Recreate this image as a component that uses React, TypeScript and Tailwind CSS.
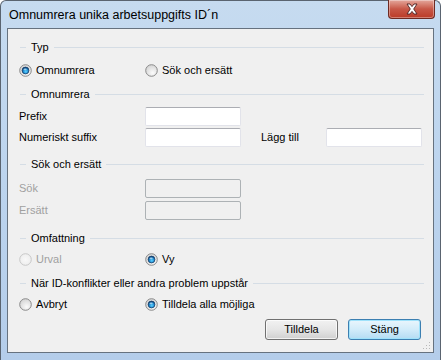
import React from "react";

function Radio({ checked = false, disabled = false }: { checked?: boolean; disabled?: boolean }) {
  return (
    <svg width="13" height="13" viewBox="0 0 13 13" className="shrink-0">
      <defs>
        <radialGradient id="rf" cx="0.6" cy="0.7" r="0.7">
          <stop offset="0" stopColor="#fbfbfb" />
          <stop offset="1" stopColor="#d4d4d4" />
        </radialGradient>
        <radialGradient id="rd" cx="0.5" cy="0.5" r="0.6">
          <stop offset="0" stopColor="#f8f8f8" />
          <stop offset="1" stopColor="#ececec" />
        </radialGradient>
        <radialGradient id="rc" cx="0.55" cy="0.65" r="0.6">
          <stop offset="0" stopColor="#5cd0ff" />
          <stop offset="0.6" stopColor="#1c8ad0" />
          <stop offset="1" stopColor="#0a3f78" />
        </radialGradient>
      </defs>
      <circle
        cx="6.5"
        cy="6.5"
        r="5.8"
        fill={disabled ? "url(#rd)" : "url(#rf)"}
        stroke={disabled ? "#c8c8c8" : "#8a8a8a"}
        strokeWidth="1"
      />
      {checked && <circle cx="6.5" cy="6.5" r="3.4" fill="url(#rc)" stroke="#19406a" strokeWidth="0.8" />}
      {checked && <ellipse cx="6.1" cy="5.3" rx="1.6" ry="0.9" fill="#ffffff" opacity="0.55" />}
    </svg>
  );
}

function Header({ text }: { text: string }) {
  return (
    <div className="flex h-[16px] items-center">
      <div className="ml-[1px] h-px w-[6px] bg-[#d5dde5]" />
      <span className="ml-[5px] mr-[5px] whitespace-nowrap text-black">{text}</span>
      <div className="h-px flex-1 bg-[#d5dde5]" />
    </div>
  );
}

function Input({ disabled = false }: { disabled?: boolean }) {
  return disabled ? (
    <div className="h-[19px] w-[96px] rounded-[2px] border border-[#adb2b5] bg-[#f0f0f0]" />
  ) : (
    <div className="h-[19px] w-[96px] rounded-[2px] border border-[#e2e3ea] border-t-[#abadb3] bg-white" />
  );
}

export default function App() {
  return (
    <div className="relative h-[360px] w-[441px] overflow-hidden font-['Liberation_Sans',sans-serif] text-[11px] leading-none text-black">
      <div className="flex h-[360px] w-[441px] flex-col rounded-t-[6px] border border-b-0 border-[#5a6470] bg-gradient-to-b from-[#c6dbf0] via-[#bcd4ee] to-[#b4cdea]">
        {/* Title bar */}
        <div className="relative flex h-[27px] shrink-0 items-center pl-[8px]">
          <span className="mt-[2px] text-[12.5px] text-black">Omnumrera unika arbetsuppgifts ID´n</span>
          <div className="absolute right-[5px] top-[-1px] flex h-[19px] w-[47px] items-center justify-center rounded-b-[4px] border border-t-0 border-[#6e2a22] bg-gradient-to-b from-[#e3a79c] via-[#c75747] to-[#bb3a26] shadow-[inset_0_0_0_1px_rgba(255,255,255,0.35)]">
            <svg width="14" height="12" viewBox="0 0 14 12">
              <path
                d="M2 1 L5 1 L7 3.6 L9 1 L12 1 L8.7 6 L12 11 L9 11 L7 8.4 L5 11 L2 11 L5.3 6 Z"
                fill="#ffffff"
                stroke="#4b2020"
                strokeWidth="0.9"
                strokeLinejoin="round"
              />
            </svg>
          </div>
        </div>
        {/* Client area */}
        <div className="mx-[6px] flex h-[325px] shrink-0 flex-col border border-[#66727f] bg-[#f0f0f0] pl-[11px] pr-[9px]">
          <div className="mt-[10px]">
            <Header text="Typ" />
          </div>
          <div className="mt-[7px] flex h-[16px] items-center">
            <div className="flex w-[126px] items-center gap-[4px]">
              <Radio checked />
              <span>Omnumrera</span>
            </div>
            <div className="flex items-center gap-[4px]">
              <Radio />
              <span>Sök och ersätt</span>
            </div>
          </div>
          <div className="mt-[8px]">
            <Header text="Omnumrera" />
          </div>
          <div className="mt-[5px] flex h-[19px] items-center">
            <span className="w-[126px]">Prefix</span>
            <Input />
          </div>
          <div className="mt-[2px] flex h-[19px] items-center">
            <span className="w-[126px]">Numeriskt suffix</span>
            <Input />
            <span className="ml-[20px] w-[65px]">Lägg till</span>
            <Input />
          </div>
          <div className="mt-[9px]">
            <Header text="Sök och ersätt" />
          </div>
          <div className="mt-[7px] flex h-[19px] items-center">
            <span className="w-[126px] text-[#a0a0a0]">Sök</span>
            <Input disabled />
          </div>
          <div className="mt-[3px] flex h-[19px] items-center">
            <span className="w-[126px] text-[#a0a0a0]">Ersätt</span>
            <Input disabled />
          </div>
          <div className="mt-[10px]">
            <Header text="Omfattning" />
          </div>
          <div className="mt-[5px] flex h-[16px] items-center">
            <div className="flex w-[126px] items-center gap-[4px]">
              <Radio disabled />
              <span className="text-[#a0a0a0]">Urval</span>
            </div>
            <div className="flex items-center gap-[4px]">
              <Radio checked />
              <span>Vy</span>
            </div>
          </div>
          <div className="mt-[8px]">
            <Header text="När ID-konflikter eller andra problem uppstår" />
          </div>
          <div className="mt-[5px] flex h-[16px] items-center">
            <div className="flex w-[126px] items-center gap-[4px]">
              <Radio />
              <span>Avbryt</span>
            </div>
            <div className="flex items-center gap-[4px]">
              <Radio checked />
              <span>Tilldela alla möjliga</span>
            </div>
          </div>
          <div className="mt-[7px] flex justify-end gap-[10px] pr-[3px]">
            <button className="flex h-[21px] w-[73px] items-center justify-center rounded-[3px] border border-[#707070] bg-gradient-to-b from-[#f2f2f2] via-[#e6e6e6] to-[#d0d0d0] shadow-[inset_0_0_0_1px_rgba(255,255,255,0.7)]">
              Tilldela
            </button>
            <button className="flex h-[21px] w-[73px] items-center justify-center rounded-[3px] border border-[#3c7fb1] bg-gradient-to-b from-[#eaf6fd] via-[#d2ecfa] to-[#b4dcf3] shadow-[inset_0_0_0_1px_#9fe2fb]">
              Stäng
            </button>
          </div>
          <div className="relative flex-1">
            <svg className="absolute bottom-[2px] right-[-7px]" width="8" height="8" viewBox="0 0 8 8">
              <rect x="6" y="0" width="1" height="1" fill="#b8b8b8" />
              <rect x="3" y="3" width="1" height="1" fill="#b8b8b8" />
              <rect x="6" y="3" width="1" height="1" fill="#b8b8b8" />
              <rect x="0" y="6" width="1" height="1" fill="#b8b8b8" />
              <rect x="3" y="6" width="1" height="1" fill="#b8b8b8" />
              <rect x="6" y="6" width="1" height="1" fill="#b8b8b8" />
            </svg>
          </div>
        </div>
        <div className="flex-1" />
      </div>
    </div>
  );
}
